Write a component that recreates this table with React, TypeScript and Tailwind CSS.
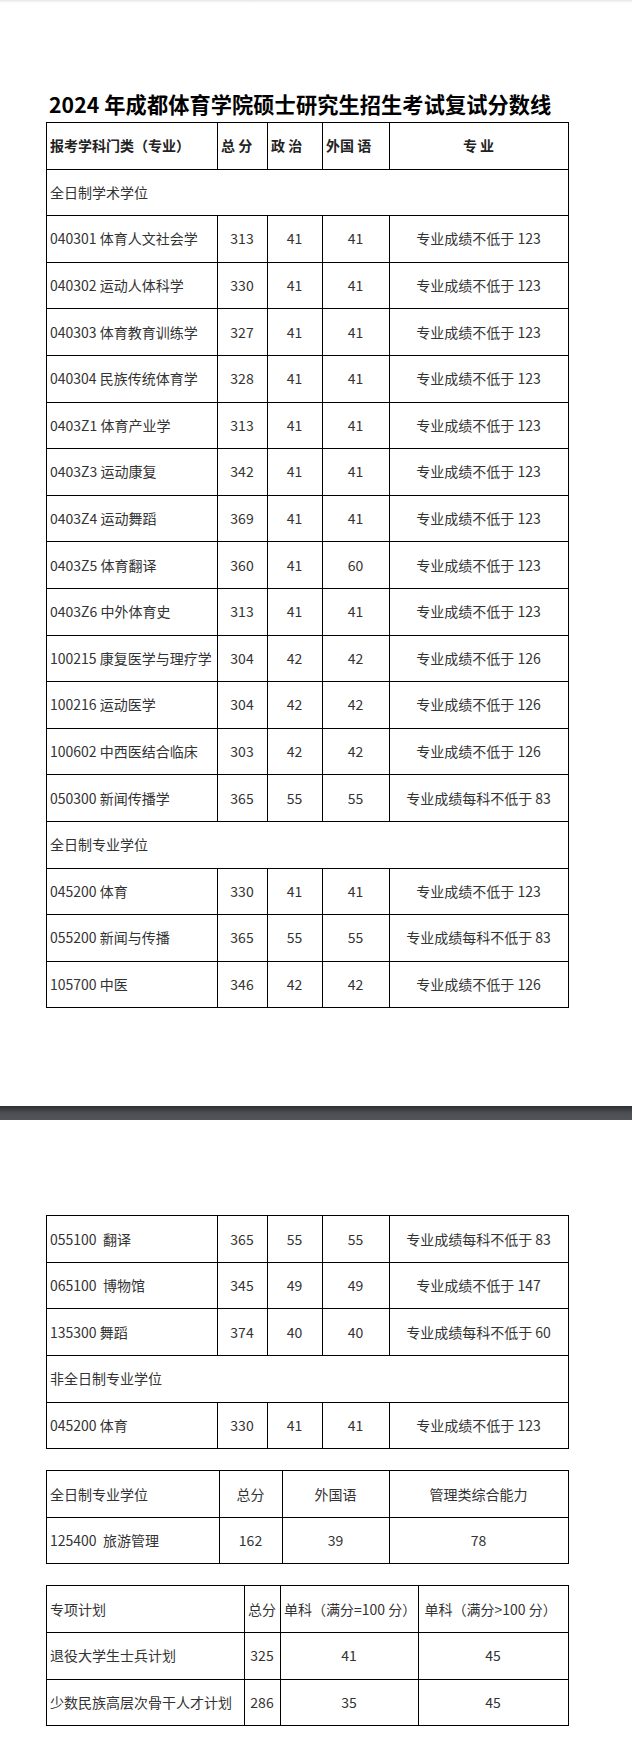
import React from "react";

const FONT = { fontFamily: '"Microsoft YaHei", "Noto Sans CJK SC", "Noto Sans", sans-serif' };

type Row = [string, string, string, string, string];

const academic: Row[] = [
  ["040301 体育人文社会学", "313", "41", "41", "专业成绩不低于 123"],
  ["040302 运动人体科学", "330", "41", "41", "专业成绩不低于 123"],
  ["040303 体育教育训练学", "327", "41", "41", "专业成绩不低于 123"],
  ["040304 民族传统体育学", "328", "41", "41", "专业成绩不低于 123"],
  ["0403Z1 体育产业学", "313", "41", "41", "专业成绩不低于 123"],
  ["0403Z3 运动康复", "342", "41", "41", "专业成绩不低于 123"],
  ["0403Z4 运动舞蹈", "369", "41", "41", "专业成绩不低于 123"],
  ["0403Z5 体育翻译", "360", "41", "60", "专业成绩不低于 123"],
  ["0403Z6 中外体育史", "313", "41", "41", "专业成绩不低于 123"],
  ["100215 康复医学与理疗学", "304", "42", "42", "专业成绩不低于 126"],
  ["100216 运动医学", "304", "42", "42", "专业成绩不低于 126"],
  ["100602 中西医结合临床", "303", "42", "42", "专业成绩不低于 126"],
  ["050300 新闻传播学", "365", "55", "55", "专业成绩每科不低于 83"],
];

const professional: Row[] = [
  ["045200 体育", "330", "41", "41", "专业成绩不低于 123"],
  ["055200 新闻与传播", "365", "55", "55", "专业成绩每科不低于 83"],
  ["105700 中医", "346", "42", "42", "专业成绩不低于 126"],
];

const page2: Row[] = [
  ["055100  翻译", "365", "55", "55", "专业成绩每科不低于 83"],
  ["065100  博物馆", "345", "49", "49", "专业成绩不低于 147"],
  ["135300 舞蹈", "374", "40", "40", "专业成绩每科不低于 60"],
];

const td = "border border-black px-[3.5px] whitespace-pre";
const tr = "h-[46.6px]";

function ScoreRow({ r }: { r: Row }) {
  return (
    <tr className={tr}>
      <td className={td}>{r[0]}</td>
      <td className={`${td} text-center`}>{r[1]}</td>
      <td className={`${td} text-center`}>{r[2]}</td>
      <td className={`${td} text-center`}>{r[3]}</td>
      <td className={`${td} text-center`}>{r[4]}</td>
    </tr>
  );
}

function SectionRow({ label }: { label: string }) {
  return (
    <tr className={tr}>
      <td colSpan={5} className={td}>{label}</td>
    </tr>
  );
}

function MainCols() {
  return (
    <colgroup>
      <col className="w-[171px]" />
      <col className="w-[50px]" />
      <col className="w-[55px]" />
      <col className="w-[67px]" />
      <col />
    </colgroup>
  );
}

const tableCls = "ml-[45.5px] w-[523px] table-fixed border-collapse border-[1.5px] border-black text-[14px] text-[#333]";

export default function App() {
  return (
    <div className="relative w-[632px] min-h-[1763px] bg-white" style={FONT}>
      <div className="h-[3px] bg-gradient-to-b from-[#e6e6e6] to-white" />

      <h1 className="mt-[86px] pl-[49px] text-[21.2px] font-bold leading-[30px] tracking-[0.1px] text-black">
        2024 年成都体育学院硕士研究生招生考试复试分数线
      </h1>

      <table className={`${tableCls} mt-[3px]`}>
        <MainCols />
        <tbody>
          <tr className={`${tr} font-bold text-[#222]`}>
            <td className={td}>报考学科门类（专业）</td>
            <td className={td}>总 分</td>
            <td className={td}>政 治</td>
            <td className={td}>外国 语</td>
            <td className={`${td} text-center`}>专 业</td>
          </tr>
          <SectionRow label="全日制学术学位" />
          {academic.map((r) => <ScoreRow key={r[0]} r={r} />)}
          <SectionRow label="全日制专业学位" />
          {professional.map((r) => <ScoreRow key={r[0]} r={r} />)}
        </tbody>
      </table>

      {/* page break */}
      <div className="mt-[98px] h-[14px] bg-gradient-to-b from-[#2b2f32] via-[#4b4f53] to-[#52565a]" />

      <table className={`${tableCls} mt-[95px]`}>
        <MainCols />
        <tbody>
          {page2.map((r) => <ScoreRow key={r[0]} r={r} />)}
          <SectionRow label="非全日制专业学位" />
          <ScoreRow r={["045200 体育", "330", "41", "41", "专业成绩不低于 123"]} />
        </tbody>
      </table>

      <table className={`${tableCls} mt-[21px]`}>
        <colgroup>
          <col className="w-[173px]" />
          <col className="w-[63px]" />
          <col className="w-[107px]" />
          <col />
        </colgroup>
        <tbody>
          <tr className={tr}>
            <td className={td}>全日制专业学位</td>
            <td className={`${td} text-center`}>总分</td>
            <td className={`${td} text-center`}>外国语</td>
            <td className={`${td} text-center`}>管理类综合能力</td>
          </tr>
          <tr className={tr}>
            <td className={td}>{"125400  旅游管理"}</td>
            <td className={`${td} text-center`}>162</td>
            <td className={`${td} text-center`}>39</td>
            <td className={`${td} text-center`}>78</td>
          </tr>
        </tbody>
      </table>

      <table className={`${tableCls} mt-[21px]`}>
        <colgroup>
          <col className="w-[198px]" />
          <col className="w-[36px]" />
          <col className="w-[138px]" />
          <col />
        </colgroup>
        <tbody>
          <tr className={tr}>
            <td className={td}>专项计划</td>
            <td className={`${td} px-0 text-center`}>总分</td>
            <td className={`${td} px-[2px]`}>单科（满分=100 分）</td>
            <td className={`${td} pl-[6px]`}>单科（满分&gt;100 分）</td>
          </tr>
          <tr className={tr}>
            <td className={td}>退役大学生士兵计划</td>
            <td className={`${td} px-0 text-center`}>325</td>
            <td className={`${td} text-center`}>41</td>
            <td className={`${td} text-center`}>45</td>
          </tr>
          <tr className={tr}>
            <td className={td}>少数民族高层次骨干人才计划</td>
            <td className={`${td} px-0 text-center`}>286</td>
            <td className={`${td} text-center`}>35</td>
            <td className={`${td} text-center`}>45</td>
          </tr>
        </tbody>
      </table>
    </div>
  );
}
